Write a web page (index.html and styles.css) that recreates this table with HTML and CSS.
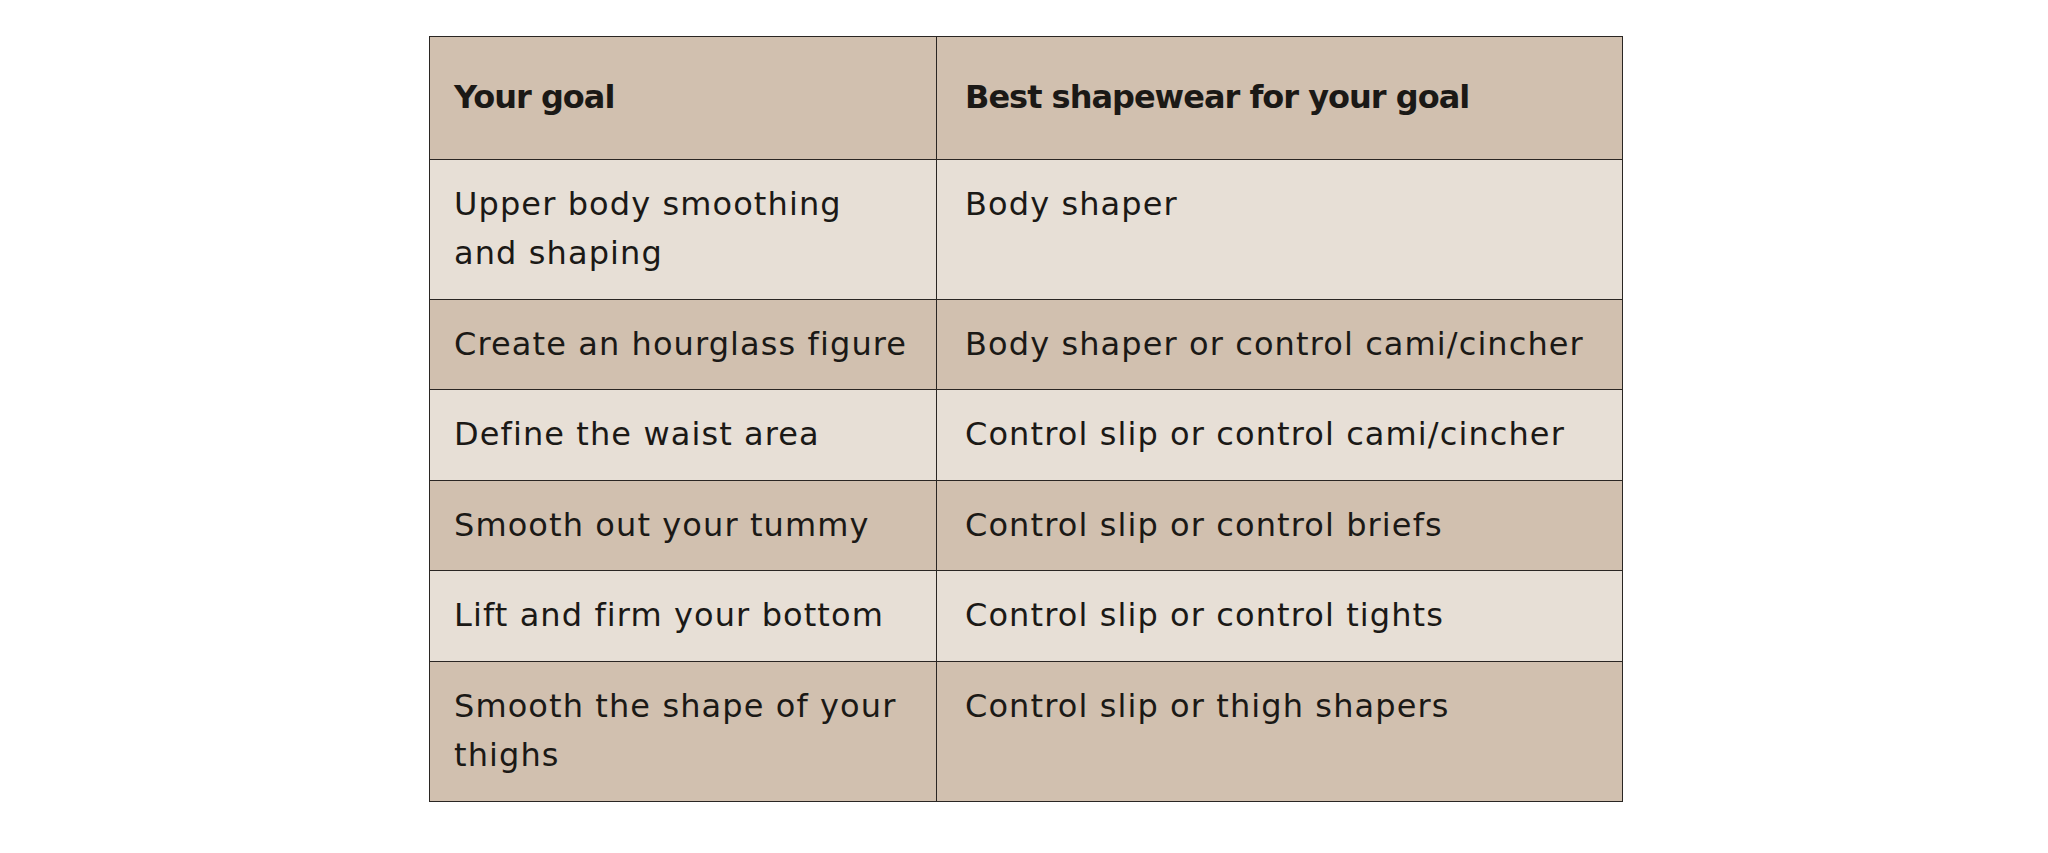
FILE: index.html
```html
<!DOCTYPE html>
<html lang="en">
<head>
<meta charset="utf-8">
<title>Shapewear guide</title>
<link rel="stylesheet" href="styles.css">
</head>
<body>
<main class="page">
  <table class="guide">
    <colgroup>
      <col class="col-goal">
      <col class="col-best">
    </colgroup>
    <thead>
      <tr class="row-dark">
        <th>Your goal</th>
        <th>Best shapewear for your goal</th>
      </tr>
    </thead>
    <tbody>
      <tr class="row-light">
        <td>Upper body smoothing and shaping</td>
        <td>Body shaper</td>
      </tr>
      <tr class="row-dark">
        <td>Create an hourglass figure</td>
        <td>Body shaper or control cami/cincher</td>
      </tr>
      <tr class="row-light">
        <td>Define the waist area</td>
        <td>Control slip or control cami/cincher</td>
      </tr>
      <tr class="row-dark">
        <td>Smooth out your tummy</td>
        <td>Control slip or control briefs</td>
      </tr>
      <tr class="row-light">
        <td>Lift and firm your bottom</td>
        <td>Control slip or control tights</td>
      </tr>
      <tr class="row-dark">
        <td>Smooth the shape of your thighs</td>
        <td>Control slip or thigh shapers</td>
      </tr>
    </tbody>
  </table>
</main>
</body>
</html>
```

FILE: styles.css
```css
html, body {
  margin: 0;
  padding: 0;
  background: #ffffff;
}

.page {
  padding: 36px 0 0 4px;
  font-family: "DejaVu Sans", "Noto Sans", sans-serif;
  color: #1b1916;
}

.guide {
  width: 1193px;
  margin: 0 auto;
  border-collapse: collapse;
  table-layout: fixed;
}

.col-goal { width: 507px; }
.col-best { width: 686px; }

.guide th,
.guide td {
  border: 1px solid #2a2623;
  text-align: left;
  vertical-align: top;
  font-size: 32px;
  font-weight: 400;
  line-height: 49.5px;
  letter-spacing: 1.1px;
  padding: 20px 26px 20px 24px;
}

.guide th {
  font-weight: 700;
  padding-top: 36px;
  padding-bottom: 36px;
  letter-spacing: -1px;
}

.guide td + td,
.guide th + th {
  padding-left: 28px;
  padding-right: 16px;
}

.row-dark { background: #d1c0af; }
.row-light { background: #e7dfd6; }
```
